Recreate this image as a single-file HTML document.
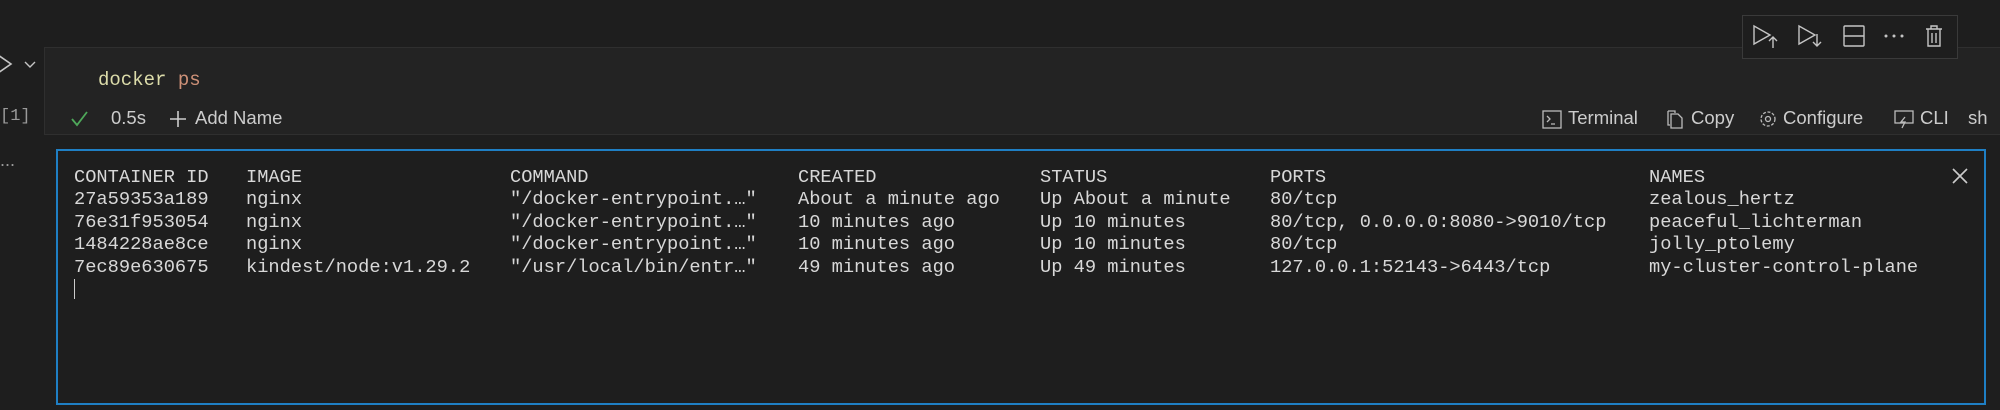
<!DOCTYPE html>
<html><head><meta charset="utf-8"><style>
html,body{margin:0;padding:0;width:2000px;height:410px;background:#1e1e1e;overflow:hidden;position:relative;font-family:"Liberation Sans",sans-serif;color:#cccccc}
.a{position:absolute;white-space:pre}
.m{font-family:"Liberation Mono",monospace;font-size:18.7px;color:#d8d8d8;line-height:22.4px}
.s{font-size:18.5px;color:#cccccc}
svg{position:absolute}
</style></head><body>
<!-- gutter -->
<svg style="left:0;top:52px" width="40" height="24" viewBox="0 0 40 24"><path d="M-2 3 L11 12 L-2 21" fill="none" stroke="#c5c5c5" stroke-width="1.6"/><path d="M25 10 L30 15 L35 10" fill="none" stroke="#c5c5c5" stroke-width="1.4"/></svg>
<div class="a" style="left:0;top:107px;font-family:'Liberation Mono',monospace;font-size:17px;color:#9a9a9a">[1]</div>
<div class="a" style="left:0;top:150px;font-size:18px;color:#9a9a9a">...</div>
<!-- cell -->
<div class="a" style="left:44px;top:47px;width:1956px;height:86px;background:#232323;border:1px solid #2f2f2f;border-right:none"></div>
<div class="a m" style="left:98px;top:69px;font-size:19px"><span style="color:#dcdcaa">docker</span> <span style="color:#ce9178">ps</span></div>
<svg style="left:70px;top:109px" width="20" height="20" viewBox="0 0 20 20"><path d="M2 10 L7 16 L17 3" fill="none" stroke="#4ea85a" stroke-width="1.8"/></svg>
<div class="a s" style="left:111px;top:107px">0.5s</div>
<svg style="left:168px;top:109px" width="20" height="20" viewBox="0 0 20 20"><path d="M10 2 V18 M2 10 H18" stroke="#cccccc" stroke-width="1.6"/></svg>
<div class="a s" style="left:195px;top:107px">Add Name</div>
<svg style="left:1541px;top:108px" width="22" height="22" viewBox="0 0 22 22"><rect x="2" y="3" width="18" height="17" fill="none" stroke="#bbb" stroke-width="1.3"/><path d="M6 8 L9 11 L6 14 M10 16 H14" fill="none" stroke="#bbb" stroke-width="1.3"/></svg>
<div class="a s" style="left:1568px;top:107px">Terminal</div>
<svg style="left:1664px;top:108px" width="22" height="22" viewBox="0 0 22 22"><path d="M4 3 H11 L11 5 M4 3 V17 H6" fill="none" stroke="#bbb" stroke-width="1.3"/><path d="M7 6 H14 L18 10 V20 H7 Z" fill="none" stroke="#bbb" stroke-width="1.3"/></svg>
<div class="a s" style="left:1691px;top:107px">Copy</div>
<svg style="left:1757px;top:108px" width="22" height="22" viewBox="0 0 22 22"><circle cx="11" cy="11" r="7" fill="none" stroke="#bbb" stroke-width="1.3" stroke-dasharray="3 1.6"/><circle cx="11" cy="11" r="2.5" fill="none" stroke="#bbb" stroke-width="1.3"/></svg>
<div class="a s" style="left:1783px;top:107px">Configure</div>
<svg style="left:1893px;top:108px" width="22" height="22" viewBox="0 0 22 22"><rect x="2" y="3" width="18" height="12" fill="none" stroke="#bbb" stroke-width="1.3"/><path d="M12 9 L8 14 H12 L9 20" fill="none" stroke="#bbb" stroke-width="1.3"/></svg>
<div class="a s" style="left:1920px;top:107px">CLI</div>
<div class="a s" style="left:1968px;top:107px">sh</div>
<!-- toolbar -->
<div class="a" style="left:1742px;top:15px;width:214px;height:42px;background:#1e1e1e;border:1px solid #3a3a3a"></div>
<svg style="left:1750px;top:22px" width="200" height="30" viewBox="0 0 200 30"><g fill="none" stroke="#c5c5c5" stroke-width="1.4"><path d="M4 4 L20 13 L4 22 Z"/><path d="M23 26 V15 M19 19 L23 15 L27 19"/><path d="M49 4 L65 13 L49 22 Z"/><path d="M67 12 V24 M63 20 L67 24 L71 20"/><rect x="94" y="4" width="20" height="20" rx="1"/><path d="M94 14 H114"/><path d="M176 7 H192 M181 7 V4 H187 V7 M178 7 V24 H190 V7 M182 11 V21 M186 11 V21"/></g><g fill="#c5c5c5"><circle cx="136" cy="14" r="1.5"/><circle cx="144" cy="14" r="1.5"/><circle cx="152" cy="14" r="1.5"/></g></svg>
<!-- output -->
<div class="a" style="left:56px;top:149px;width:1926px;height:252px;background:#1e1e1e;border:2px solid #1f7fc4"></div>
<svg style="left:1950px;top:166px" width="20" height="20" viewBox="0 0 20 20"><path d="M3 3 L17 17 M17 3 L3 17" stroke="#ccc" stroke-width="1.6"/></svg>
<div class="a m" style="left:74px;top:166px">CONTAINER ID
27a59353a189
76e31f953054
1484228ae8ce
7ec89e630675</div>
<div class="a m" style="left:246px;top:166px">IMAGE
nginx
nginx
nginx
kindest/node:v1.29.2</div>
<div class="a m" style="left:510px;top:166px">COMMAND
"/docker-entrypoint.…"
"/docker-entrypoint.…"
"/docker-entrypoint.…"
"/usr/local/bin/entr…"</div>
<div class="a m" style="left:798px;top:166px">CREATED
About a minute ago
10 minutes ago
10 minutes ago
49 minutes ago</div>
<div class="a m" style="left:1040px;top:166px">STATUS
Up About a minute
Up 10 minutes
Up 10 minutes
Up 49 minutes</div>
<div class="a m" style="left:1270px;top:166px">PORTS
80/tcp
80/tcp, 0.0.0.0:8080-&gt;9010/tcp
80/tcp
127.0.0.1:52143-&gt;6443/tcp</div>
<div class="a m" style="left:1649px;top:166px">NAMES
zealous_hertz
peaceful_lichterman
jolly_ptolemy
my-cluster-control-plane</div>
<div class="a" style="left:74px;top:279px;width:1px;height:20px;background:#ccc"></div>
</body></html>
